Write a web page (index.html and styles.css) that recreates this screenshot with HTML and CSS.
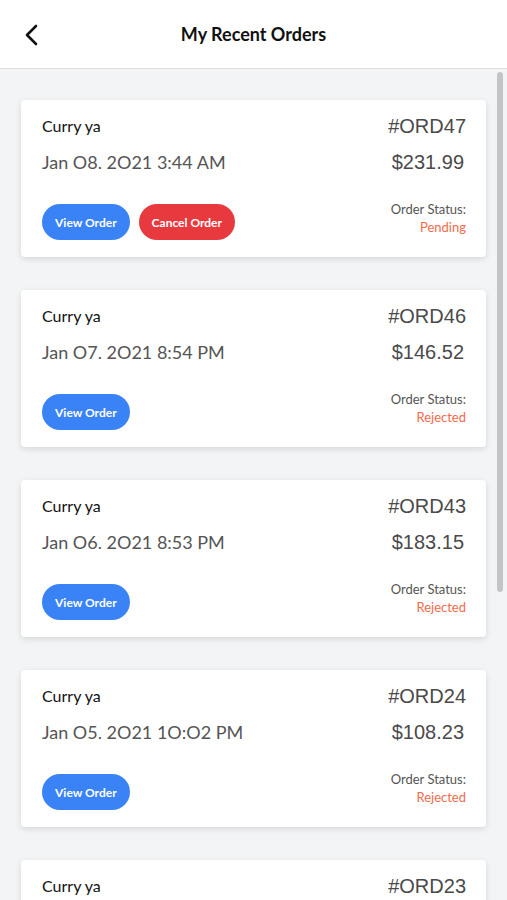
FILE: index.html
```html
<!DOCTYPE html>
<html lang="en">
<head>
  <meta charset="UTF-8">
  <title>My Recent Orders</title>
  <link rel="stylesheet" href="styles.css">
</head>
<body>

  <div class="header">
    <button class="back-btn" aria-label="Back">
      <svg width="16" height="22" viewBox="0 0 16 22">
        <polyline points="12,2 3,11 12,20" fill="none" stroke="#111" stroke-width="2.6" stroke-linecap="round" stroke-linejoin="round"/>
      </svg>
    </button>
    <h1 class="title">My Recent Orders</h1>
  </div>

  <div class="lista">
    <div class="scrollbar"></div>

    <div class="pedido">
      <div class="fila">
        <span class="nombre">Curry ya</span>
        <span class="numero">#ORD47</span>
      </div>
      <div class="fila">
        <span class="fecha">Jan O8. 2O21 3:44 AM</span>
        <span class="precio">$231.99</span>
      </div>
      <div class="fila acciones">
        <div class="botones">
          <button class="btn btn-ver">View Order</button>
          <button class="btn btn-cancelar">Cancel Order</button>
        </div>
        <div class="estado">
          <span>Order Status:</span>
          <span class="estado-valor">Pending</span>
        </div>
      </div>
    </div>

    <div class="pedido">
      <div class="fila">
        <span class="nombre">Curry ya</span>
        <span class="numero">#ORD46</span>
      </div>
      <div class="fila">
        <span class="fecha">Jan O7. 2O21 8:54 PM</span>
        <span class="precio">$146.52</span>
      </div>
      <div class="fila acciones">
        <div class="botones">
          <button class="btn btn-ver">View Order</button>
        </div>
        <div class="estado">
          <span>Order Status:</span>
          <span class="estado-valor">Rejected</span>
        </div>
      </div>
    </div>

    <div class="pedido">
      <div class="fila">
        <span class="nombre">Curry ya</span>
        <span class="numero">#ORD43</span>
      </div>
      <div class="fila">
        <span class="fecha">Jan O6. 2O21 8:53 PM</span>
        <span class="precio">$183.15</span>
      </div>
      <div class="fila acciones">
        <div class="botones">
          <button class="btn btn-ver">View Order</button>
        </div>
        <div class="estado">
          <span>Order Status:</span>
          <span class="estado-valor">Rejected</span>
        </div>
      </div>
    </div>

    <div class="pedido">
      <div class="fila">
        <span class="nombre">Curry ya</span>
        <span class="numero">#ORD24</span>
      </div>
      <div class="fila">
        <span class="fecha">Jan O5. 2O21 1O:O2 PM</span>
        <span class="precio">$108.23</span>
      </div>
      <div class="fila acciones">
        <div class="botones">
          <button class="btn btn-ver">View Order</button>
        </div>
        <div class="estado">
          <span>Order Status:</span>
          <span class="estado-valor">Rejected</span>
        </div>
      </div>
    </div>

    <div class="pedido">
      <div class="fila">
        <span class="nombre">Curry ya</span>
        <span class="numero">#ORD23</span>
      </div>
      <div class="fila">
        <span class="fecha">Jan O4. 2O21 9:12 PM</span>
        <span class="precio">$96.40</span>
      </div>
      <div class="fila acciones">
        <div class="botones">
          <button class="btn btn-ver">View Order</button>
        </div>
        <div class="estado">
          <span>Order Status:</span>
          <span class="estado-valor">Rejected</span>
        </div>
      </div>
    </div>
  </div>

</body>
</html>
```

FILE: styles.css
```css
* {
  box-sizing: border-box;
}

body {
  margin: 0;
  padding: 0;
  height: 100vh;
  overflow: hidden;
  background: #f3f4f6;
  font-family: 'Lato', sans-serif;
  color: #222;
}

.header {
  position: relative;
  height: 69px;
  background: #fff;
  border-bottom: 1px solid #dcdcdc;
  display: flex;
  align-items: center;
  justify-content: center;
}

.back-btn {
  position: absolute;
  left: 24px;
  top: 24px;
  background: transparent;
  border: none;
  padding: 0;
  cursor: pointer;
}

.title {
  margin: 0;
  font-size: 18px;
  font-weight: 700;
  color: #111;
}

.lista {
  position: relative;
  padding: 31px 21px 0 21px;
  display: flex;
  flex-direction: column;
  gap: 33px;
}

.scrollbar {
  position: absolute;
  right: 4px;
  top: 3px;
  width: 6px;
  height: 520px;
  background: #c4c4c4;
  border-radius: 3px;
}

.pedido {
  background: #fff;
  border-radius: 4px;
  box-shadow: 0 2px 6px rgba(0, 0, 0, 0.12);
  padding: 14px 20px 17px 21px;
}

.fila {
  display: flex;
  justify-content: space-between;
  align-items: center;
  line-height: 24px;
}

.fila + .fila {
  margin-top: 12px;
}

.nombre {
  font-size: 16px;
  color: #111;
}

.fecha {
  font-size: 18px;
  color: #555;
}

.numero,
.precio {
  font-family: 'Liberation Sans', sans-serif;
  font-size: 20px;
  color: #4a4a4a;
}

.precio {
  margin-right: 2px;
}

.fila.acciones {
  align-items: flex-start;
  margin-top: 26px;
}

.botones {
  display: flex;
  gap: 9px;
  margin-top: 4px;
}

.btn {
  height: 36px;
  border: none;
  border-radius: 18px;
  padding: 0 13px;
  font-family: 'Lato', sans-serif;
  font-size: 12px;
  font-weight: 700;
  color: #fff;
  cursor: pointer;
}

.btn-ver {
  background-color: #3a83f7;
}

.btn-cancelar {
  background-color: #e8393f;
}

.estado {
  display: flex;
  flex-direction: column;
  align-items: flex-end;
  font-size: 13px;
  line-height: 18px;
  color: #555;
}

.estado-valor {
  color: #f26a4b;
}
```
